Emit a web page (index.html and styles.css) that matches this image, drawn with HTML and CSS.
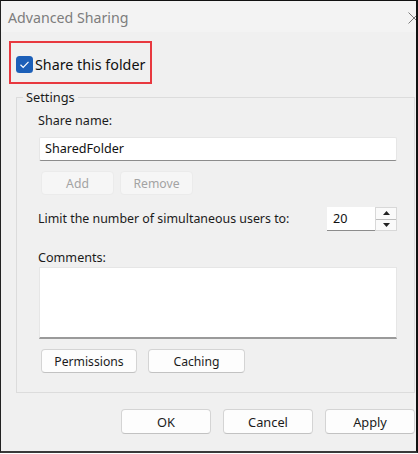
FILE: index.html
```html
<!DOCTYPE html>
<html>
<head>
<meta charset="utf-8">
<title>Advanced Sharing</title>
<link rel="stylesheet" href="styles.css">
</head>
<body>
<div class="window">
  <div class="titlebar">
    <span class="title">Advanced Sharing</span>
    <svg class="close" width="12" height="12" viewBox="0 0 12 12"><path d="M0.5 0.5 L11.5 11.5 M11.5 0.5 L0.5 11.5" stroke="#7a7a7a" stroke-width="1" fill="none"/></svg>
  </div>
  <div class="share-box">
    <svg class="checkbox" width="17" height="17" viewBox="0 0 17 17"><rect x="0" y="0" width="17" height="17" rx="3.5" fill="#1c5fb8"/><path d="M4.5 8.8 L7.2 11.4 L12.5 5.8" stroke="#fff" stroke-width="1.2" fill="none"/></svg>
    <span class="share-label">Share this folder</span>
  </div>
  <fieldset class="group">
    <legend class="legend">Settings</legend>
    <div class="group-body">
      <div class="label">Share name:</div>
      <div class="textbox">SharedFolder</div>
      <div class="btn-row small">
        <button class="btn disabled w73">Add</button>
        <button class="btn disabled w73">Remove</button>
      </div>
      <div class="limit-row">
        <span class="label">Limit the number of simultaneous users to:</span>
        <div class="spinner">
          <div class="spin-input">20</div>
          <div class="spin-buttons">
            <div class="spin-btn"><svg width="7" height="4" viewBox="0 0 7 4"><path d="M0 4 L3.5 0 L7 4 Z" fill="#222"/></svg></div>
            <div class="spin-btn"><svg width="7" height="4" viewBox="0 0 7 4"><path d="M0 0 L3.5 4 L7 0 Z" fill="#222"/></svg></div>
          </div>
        </div>
      </div>
      <div class="label comments-label">Comments:</div>
      <div class="textarea"></div>
      <div class="btn-row perm">
        <button class="btn w96">Permissions</button>
        <button class="btn w97">Caching</button>
      </div>
    </div>
  </fieldset>
  <div class="footer">
    <button class="btn w90">OK</button>
    <button class="btn w90">Cancel</button>
    <button class="btn w90">Apply</button>
  </div>
</div>
</body>
</html>
```

FILE: styles.css
```css
html, body {
  margin: 0;
  padding: 0;
  background: #ffffff;
}
body {
  font-family: "Noto Sans", "Open Sans", sans-serif;
  font-size: 12.6px;
  color: #1b1b1b;
}
.window {
  box-sizing: border-box;
  width: 418px;
  height: 453px;
  background: #f0f0f0;
  border-top: 1px solid #111;
  border-left: 1px solid #222;
  border-right: 2px solid #111;
  border-bottom: 2px solid #3a3a3a;
  overflow: hidden;
  display: flex;
  flex-direction: column;
}
.titlebar {
  height: 31px;
  display: flex;
  align-items: center;
  justify-content: space-between;
  padding-left: 7px;
  background: #f3f3f3;
  flex: none;
}
.title {
  font-size: 14.2px;
  color: #7d7d7d;
  margin-top: 1px;
}
.close {
  margin-right: -4px;
  margin-top: 2px;
}
.share-box {
  box-sizing: border-box;
  width: 143px;
  height: 43px;
  margin: 9px 0 0 8px;
  border: 2px solid #e8383f;
  display: flex;
  align-items: center;
  padding: 4px 0 0 5px;
  flex: none;
}
.checkbox {
  flex: none;
}
.share-label {
  margin-left: 2px;
  font-size: 14.3px;
  color: #111;
}
.group {
  box-sizing: border-box;
  width: 399px;
  margin: 4px 0 0 15px;
  padding: 6px 17px 19px 6px;
  border: 1px solid #dcdcdc;
  flex: none;
}
.legend {
  padding: 0 3px;
  line-height: 18px;
  font-size: 12.8px;
  color: #1b1b1b;
}
.group-body {
  padding-left: 16px;
  display: flex;
  flex-direction: column;
}
.label {
  line-height: 18px;
  color: #1b1b1b;
  margin-left: -1px;
}
.limit-row .label {
  font-size: 12.4px;
}
.textbox {
  box-sizing: border-box;
  height: 24px;
  margin-top: 7px;
  background: #fff;
  border: 1px solid #e6e6e6;
  border-bottom: 1px solid #8c8c8c;
  border-radius: 2px;
  padding-left: 5px;
  line-height: 22px;
  color: #111;
}
.btn-row {
  display: flex;
  margin-left: 2px;
}
.btn-row.small {
  margin-top: 10px;
  gap: 6px;
}
.btn-row.perm {
  margin-top: 10px;
  gap: 11px;
}
.btn {
  box-sizing: border-box;
  height: 24px;
  padding: 0;
  font-family: "Noto Sans", "Open Sans", sans-serif;
  font-size: 12.2px;
  color: #1b1b1b;
  background: #fdfdfd;
  border: 1px solid #d4d4d4;
  border-bottom-color: #c2c2c2;
  border-radius: 4px;
}
.btn.disabled {
  color: #a3a3a3;
  background: #f6f6f6;
  border-color: #ebebeb;
}
.w73 { width: 73px; }
.w96 { width: 96px; }
.w97 { width: 97px; }
.w90 { width: 90px; height: 25px; font-size: 12.8px; }
.limit-row {
  margin-top: 12px;
  display: flex;
  align-items: center;
  justify-content: space-between;
}
.spinner {
  display: flex;
  height: 24px;
}
.spin-input {
  box-sizing: border-box;
  width: 48px;
  height: 24px;
  background: #fff;
  border-bottom: 1px solid #8c8c8c;
  padding-left: 6px;
  line-height: 24px;
  color: #111;
}
.spin-buttons {
  box-sizing: border-box;
  width: 22px;
  height: 24px;
  background: #fafafa;
  border: 1px solid #d8d8d8;
  display: flex;
  flex-direction: column;
}
.spin-btn {
  flex: 1;
  display: flex;
  align-items: center;
  justify-content: center;
}
.spin-btn + .spin-btn {
  border-top: 1px solid #bdbdbd;
}
.comments-label {
  margin-top: 18px;
}
.textarea {
  box-sizing: border-box;
  height: 72px;
  background: #fff;
  border: 1px solid #e6e6e6;
  border-bottom: 2px solid #9a9a9a;
}
.footer {
  display: flex;
  justify-content: flex-end;
  gap: 12px;
  margin-top: 16px;
  padding-right: 1px;
}
```
